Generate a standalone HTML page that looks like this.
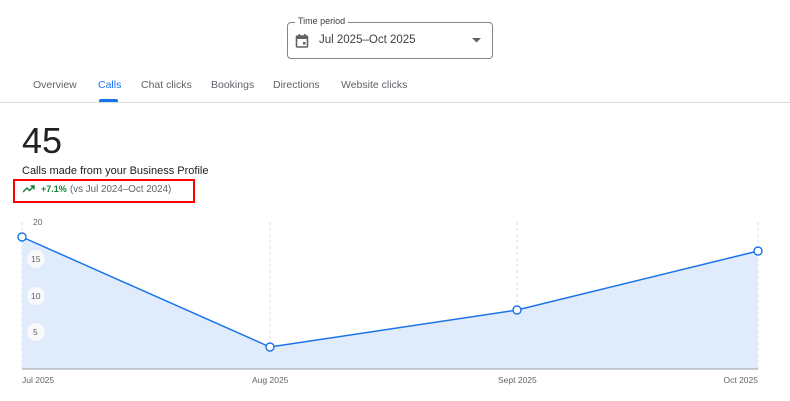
<!DOCTYPE html>
<html><head><style>
body{margin:0;width:790px;height:401px;background:#fff;font-family:"Liberation Sans",Arial,sans-serif;position:relative;overflow:hidden}
.a{position:absolute;white-space:nowrap}
.tab{position:absolute;top:79px;font-size:10.5px;color:#5f6368}
</style></head><body>
<div class="a" style="left:287px;top:22px;width:204px;height:35px;border:1px solid #80868b;border-radius:4px"></div>
<div class="a" style="left:295px;top:16px;background:#fff;padding:0 3px;font-size:9px;color:#3c4043">Time period</div>
<svg class="a" style="left:295px;top:33px" width="14" height="15" viewBox="0 0 14 15"><rect x="1.5" y="3" width="11" height="11" rx="1" fill="none" stroke="#5f6368" stroke-width="1.6"/><rect x="1.5" y="3" width="11" height="3" fill="#5f6368"/><rect x="3.5" y="1" width="1.6" height="3" fill="#5f6368"/><rect x="9" y="1" width="1.6" height="3" fill="#5f6368"/><rect x="8" y="9" width="2.5" height="2.5" fill="#5f6368"/></svg>
<div class="a" style="left:319px;top:34px;font-size:11.5px;color:#3c4043">Jul 2025–Oct 2025</div>
<svg class="a" style="left:472px;top:38px" width="9" height="5"><path d="M0 0L4.5 4.5L9 0Z" fill="#5f6368"/></svg>
<div class="tab" style="left:33px">Overview</div>
<div class="tab" style="left:98px;color:#1a73e8">Calls</div>
<div class="tab" style="left:141px">Chat clicks</div>
<div class="tab" style="left:211px">Bookings</div>
<div class="tab" style="left:273px">Directions</div>
<div class="tab" style="left:341px">Website clicks</div>
<div class="a" style="left:99px;top:99px;width:19px;height:3px;background:#1a73e8;border-radius:2px 2px 0 0"></div>
<div class="a" style="left:0;top:102px;width:790px;height:1px;background:#dadce0"></div>
<div class="a" style="left:22px;top:120px;font-size:36px;color:#202124">45</div>
<div class="a" style="left:22px;top:165px;font-size:11px;color:#202124">Calls made from your Business Profile</div>
<div class="a" style="left:13px;top:179px;width:178px;height:20px;border:2px solid #f00"></div>
<svg class="a" style="left:23px;top:185px" width="12" height="8"><path d="M0 7L4 3L6.5 5.5L10.5 1.5M7.5 1H11V4.5" fill="none" stroke="#188038" stroke-width="1.5"/></svg>
<div class="a" style="left:41px;top:184px;font-size:9px;color:#188038;font-weight:bold">+7.1%</div>
<div class="a" style="left:70px;top:184px;font-size:9.8px;color:#5f6368">(vs Jul 2024–Oct 2024)</div>
<svg class="a" style="left:0;top:210px" width="790" height="191">
<g stroke="#dadce0" stroke-dasharray="3,3"><path d="M22 12V159M270 12V159M517 12V159M758 12V159"/></g>
<path d="M22 27L270 137L517 100L758 41V159H22Z" fill="#e0ecfb"/>
<path d="M22 159H758" stroke="#9aa0a6"/>
<path d="M22 27L270 137L517 100L758 41" fill="none" stroke="#1a73e8" stroke-width="1.5"/>
<g fill="#f8f9fa"><circle cx="36" cy="49" r="9"/><circle cx="36" cy="86" r="9"/><circle cx="36" cy="122" r="9"/></g>
<g fill="#fff" stroke="#1a73e8" stroke-width="1.4"><circle cx="22" cy="27" r="4"/><circle cx="270" cy="137" r="4"/><circle cx="517" cy="100" r="4"/><circle cx="758" cy="41" r="4"/></g>
<g font-size="8.5" fill="#5f6368" font-family="Liberation Sans,sans-serif"><text x="33" y="15">20</text><text x="31" y="52">15</text><text x="31" y="89">10</text><text x="33" y="125">5</text>
<text x="22" y="173">Jul 2025</text><text x="252" y="173">Aug 2025</text><text x="498" y="173">Sept 2025</text><text x="758" y="173" text-anchor="end">Oct 2025</text></g>
</svg>
</body></html>
